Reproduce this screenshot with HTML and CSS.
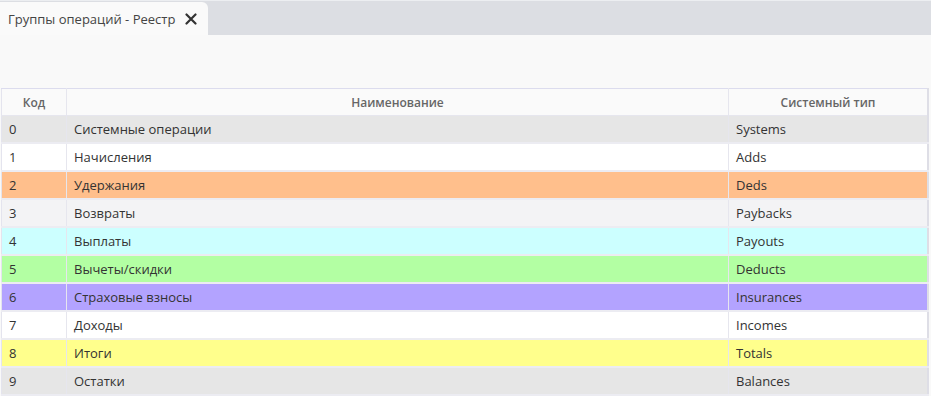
FILE: index.html
```html
<!DOCTYPE html>
<html lang="ru">
<head>
  <meta charset="UTF-8" />
  <title>Группы операций - Реестр</title>
  <link rel="stylesheet" href="styles.css">
</head>
<body>
  <div class="tabs">
    <div class="tab">
      <span>Группы операций - Реестр</span>
      <svg class="close" width="12" height="12" viewBox="0 0 12 12"><path d="M1.5 1.5 L10.5 10.5 M10.5 1.5 L1.5 10.5" stroke="#333" stroke-width="2.2" stroke-linecap="round"/></svg>
    </div>
  </div>

  <div class="page">
    <table class="grid">
      <thead>
        <tr><th class="c-code">Код</th><th>Наименование</th><th class="c-type">Системный тип</th></tr>
      </thead>
      <tbody>
        <tr class="r-gray"><td>0</td><td>Системные операции</td><td>Systems</td></tr>
        <tr class="r-white"><td>1</td><td>Начисления</td><td>Adds</td></tr>
        <tr class="r-orange"><td>2</td><td>Удержания</td><td>Deds</td></tr>
        <tr class="r-light"><td>3</td><td>Возвраты</td><td>Paybacks</td></tr>
        <tr class="r-cyan"><td>4</td><td>Выплаты</td><td>Payouts</td></tr>
        <tr class="r-green"><td>5</td><td>Вычеты/скидки</td><td>Deducts</td></tr>
        <tr class="r-violet"><td>6</td><td>Страховые взносы</td><td>Insurances</td></tr>
        <tr class="r-white"><td>7</td><td>Доходы</td><td>Incomes</td></tr>
        <tr class="r-yellow"><td>8</td><td>Итоги</td><td>Totals</td></tr>
        <tr class="r-gray"><td>9</td><td>Остатки</td><td>Balances</td></tr>
      </tbody>
    </table>
  </div>
</body>
</html>
```

FILE: styles.css
```css
body {
  margin: 0;
  font-family: 'Open Sans', sans-serif;
  background: #f9f9f9;
  color: #333;
  overflow: hidden;
}
.tabs {
  height: 35px;
  background: #dcdee3;
  border-top: 1px solid #eceef1;
  box-sizing: border-box;
  display: flex;
  align-items: flex-end;
}
.tab {
  width: 208px;
  height: 33px;
  box-sizing: border-box;
  background: #fafafa;
  border-top-right-radius: 6px;
  display: flex;
  align-items: center;
  padding-left: 8px;
  font-size: 13px;
  color: #444;
}
.close { margin-left: 10px; }
.page { padding: 53px 2px 0 1px; }
.grid {
  width: 928px;
  border-collapse: collapse;
  table-layout: fixed;
  font-size: 13px;
  border-top: 1px solid #dcdcee;
  border-left: 1px solid #e4e4ee;
  border-right: 2px solid #dedee6;
}
.grid th {
  height: 26px;
  background: #fafafa;
  color: #666;
  font-size: 12px;
  font-weight: 600;
  text-align: center;
  border-right: 1px solid #e6e6ee;
  border-bottom: 1px solid #e6e6ee;
  padding: 0;
}
.c-code { width: 64px; }
.c-type { width: 198px; }
.grid td {
  height: 26px;
  padding: 0 7px;
  border-right: 1px solid #e6e6ee;
  border-bottom: 2px solid #ececf2;
  white-space: nowrap;
}
.r-gray td { background: #e6e6e6; }
.r-white td { background: #fff; }
.r-orange td { background: #ffbf8c; }
.r-light td { background: #f3f3f5; }
.r-cyan td { background: #ccffff; }
.r-green td { background: #b3ffa3; }
.r-violet td { background: #b3a3ff; }
.r-yellow td { background: #ffff8c; }
```
